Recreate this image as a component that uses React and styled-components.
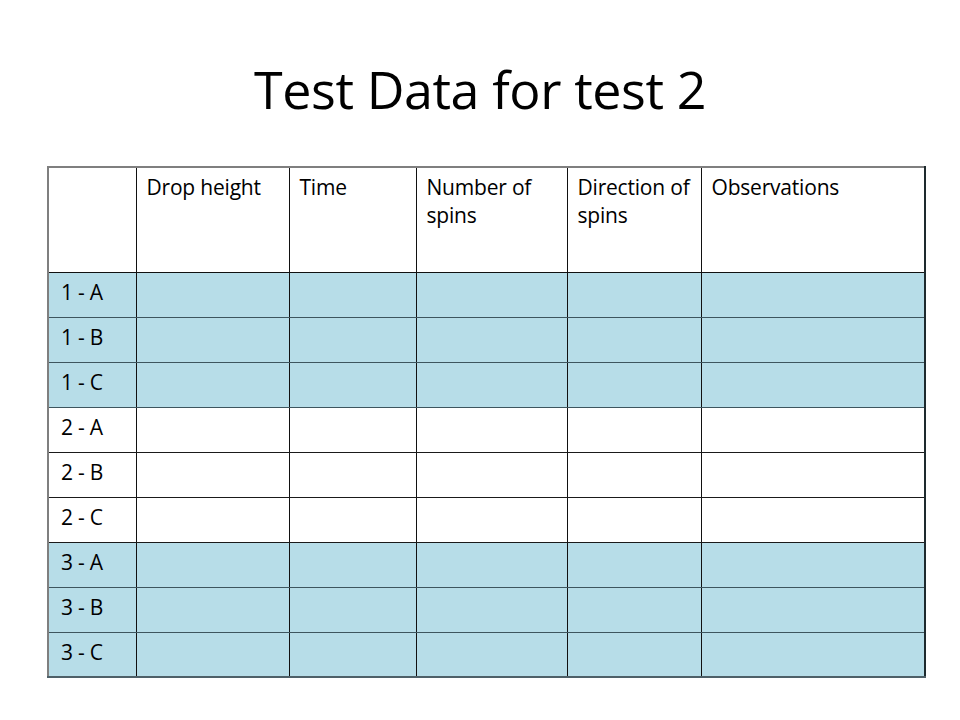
import React from 'react'
import styled, { createGlobalStyle } from 'styled-components'

const GlobalStyle = createGlobalStyle`
  html, body {
    margin: 0;
    padding: 0;
    background: #ffffff;
  }
  body {
    font-family: 'Open Sans', 'Liberation Sans', sans-serif;
    color: #000;
  }
`

const Slide = styled.div`
  width: 960px;
  height: 720px;
  background: #fff;
  overflow: hidden;
`

const Title = styled.h1`
  margin: 0;
  padding-top: 58px;
  height: 166px;
  box-sizing: border-box;
  text-align: center;
  font-family: 'Open Sans', 'Liberation Sans', sans-serif;
  font-weight: 400;
  font-size: 52px;
  line-height: 62px;
  letter-spacing: -0.4px;
`

const Table = styled.table`
  margin-left: 47px;
  width: 877px;
  border-collapse: collapse;
  table-layout: fixed;
  border-top: 2px solid #7f7f7f;
  border-left: 2px solid #7f7f7f;
  border-bottom: 2px solid #4e6068;
  border-right: 2px solid #1e2a2e;
`

const HeadCell = styled.th`
  height: 105px;
  padding: 5px 10px 0;
  box-sizing: border-box;
  vertical-align: top;
  text-align: left;
  font-weight: 400;
  font-size: 21px;
  line-height: 28px;
  letter-spacing: -0.2px;
  border-right: 1px solid #111;
  border-bottom: 1.5px solid #111;
  background: #fff;
`

const Row = styled.tr`
  background: ${(p) => (p.$shaded ? '#b7dde8' : '#ffffff')};
`

const Cell = styled.td`
  height: 45px;
  padding: 5px 12px 0;
  box-sizing: border-box;
  vertical-align: top;
  font-size: 21px;
  line-height: 28px;
  letter-spacing: -0.2px;
  border-right: 1px solid #111;
  border-bottom: 1.5px solid ${(p) => (p.$shaded ? '#3d555e' : '#1a1a1a')};
`

const widths = [88, 153, 127, 151, 134, 224]
const headers = ['', 'Drop height', 'Time', 'Number of spins', 'Direction of spins', 'Observations']
const rows = [
  { label: '1 - A', shaded: true },
  { label: '1 - B', shaded: true },
  { label: '1 - C', shaded: true },
  { label: '2 - A', shaded: false },
  { label: '2 - B', shaded: false },
  { label: '2 - C', shaded: false },
  { label: '3 - A', shaded: true },
  { label: '3 - B', shaded: true },
  { label: '3 - C', shaded: true },
]

export default function App() {
  return (
    <Slide>
      <GlobalStyle />
      <Title>Test Data for test 2</Title>
      <Table>
        <colgroup>
          {widths.map((w, i) => (
            <col key={i} style={{ width: w }} />
          ))}
        </colgroup>
        <thead>
          <tr>
            {headers.map((h, i) => (
              <HeadCell key={i}>{h}</HeadCell>
            ))}
          </tr>
        </thead>
        <tbody>
          {rows.map((r) => (
            <Row key={r.label} $shaded={r.shaded}>
              <Cell $shaded={r.shaded}>{r.label}</Cell>
              {widths.slice(1).map((_, i) => (
                <Cell key={i} $shaded={r.shaded} />
              ))}
            </Row>
          ))}
        </tbody>
      </Table>
    </Slide>
  )
}
